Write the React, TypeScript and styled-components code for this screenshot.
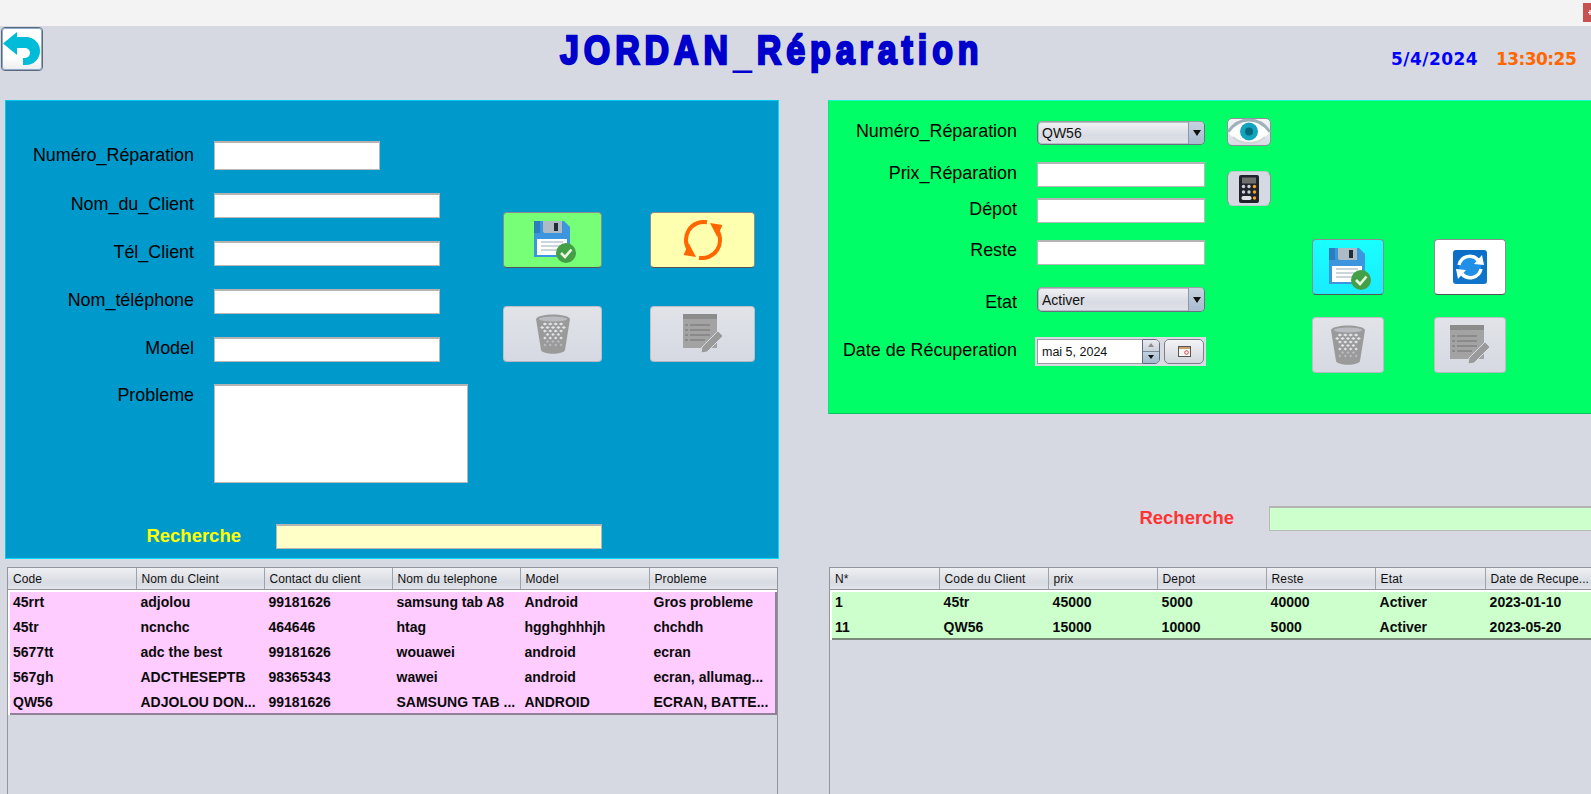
import React from "react";
import styled, { createGlobalStyle } from "styled-components";

const Global = createGlobalStyle`
  html, body { margin: 0; padding: 0; background: #d6d9e2; }
  body { font-family: "Liberation Sans", Arial, sans-serif; overflow: hidden; }
  * { box-sizing: border-box; }
`;

const Page = styled.div`
  width: 1591px; height: 794px; overflow: hidden; background: #d6d9e2; color: #000;
`;
const WindowStrip = styled.div`
  height: 26px; background: #f3f3f3; display: flex; justify-content: flex-end; padding-top: 3px;
`;
const CloseTab = styled.div`
  width: 8px; height: 19px; background: #c75050; display: flex; align-items: center; justify-content: flex-end;
  svg { display: block; }
`;
const Header = styled.header`
  height: 74px; display: flex; align-items: flex-start;
`;
const BackButton = styled.button`
  width: 42px; height: 44px; margin: 1px 0 0 1px; padding: 0; display: block; flex: none;
  border: 1px solid #5e6a7c; outline: 1px solid #8aa9cc; outline-offset: -2px; border-radius: 4px;
  background: linear-gradient(#ffffff 70%, #ececec);
  svg { display: block; }
`;
const Title = styled.h1`
  margin: 0 0 0 517px; font-family: "Liberation Sans", sans-serif;
  font-weight: 700; font-size: 41px; line-height: 48px; letter-spacing: 6px; color: #0000cc; white-space: nowrap;
  -webkit-text-stroke: 2.4px #0000cc; transform: scaleX(0.827); transform-origin: left center;
`;
const TitleUnderscore = styled.span`
  -webkit-text-stroke: 0; font-weight: 400; position: relative; top: 1px;
`;
const Clock = styled.div`
  position: absolute; left: 1391px; top: 47px; display: flex; gap: 18px;
  font-family: "DejaVu Sans", sans-serif; font-weight: 700; font-size: 17px; line-height: 24px; white-space: nowrap;
`;
const ClockPart = styled.span<{ $color: string; $spacing: number }>`
  color: ${(p) => p.$color}; letter-spacing: ${(p) => p.$spacing}px;
`;
const Main = styled.main`
  display: flex; align-items: flex-start;
`;
const LeftColumn = styled.section`
  width: 774px; margin-left: 5px; flex: none;
`;
const RightColumn = styled.section`
  margin-left: 49px; width: 763px; flex: none;
`;
const BluePanel = styled.div`
  height: 459px; background: #0099cc; border: 1px solid #00c8f0; border-right-color: #00ddff; border-bottom-color: #00ddff;
  display: grid; grid-template-columns: 497px auto; align-content: start; padding-top: 40px;
`;
const GreenPanel = styled.div`
  height: 314px; background: #00ff66; border-top: 1px solid #19f5d0; border-bottom: 1px solid #10c060; border-left: 1px solid #10e080;
  display: flex; align-items: flex-start; padding-top: 20px;
`;
const FormColumn = styled.div``;
const FormRow = styled.div<{ $top?: number; $labelWidth: number; $start?: boolean }>`
  display: grid; grid-template-columns: ${(p) => p.$labelWidth}px auto; column-gap: 20px;
  align-items: ${(p) => (p.$start ? "start" : "center")}; margin-top: ${(p) => p.$top ?? 0}px;
`;
const Label = styled.label<{ $shift?: number }>`
  font-size: 17.9px; line-height: 20px; text-align: right; white-space: nowrap; color: #000; display: block;
  margin-top: ${(p) => p.$shift ?? -4}px;
`;
const Field = styled.div<{ $w: number; $h: number; $bg?: string }>`
  width: ${(p) => p.$w}px; height: ${(p) => p.$h}px; background: ${(p) => p.$bg ?? "#fff"};
  border: 1px solid #b9b9b9; border-top: 2px solid #b4b4b4; border-bottom-width: 1px;
`;
const ButtonGrid = styled.div<{ $cols: string; $gap: number; $rowGap: number; $top: number; $left: number }>`
  display: grid; grid-template-columns: ${(p) => p.$cols}; column-gap: ${(p) => p.$gap}px; row-gap: ${(p) => p.$rowGap}px;
  grid-auto-rows: 56px; margin-top: ${(p) => p.$top}px; margin-left: ${(p) => p.$left}px; align-self: start;
`;
const ActionButton = styled.button<{ $bg?: string; $off?: boolean }>`
  padding: 0; display: flex; align-items: center; justify-content: center; border-radius: 4px;
  background: ${(p) => p.$bg ?? "linear-gradient(#e1e3e8, #d6d9e2)"};
  border: 1px solid ${(p) => (p.$off ? "#bcbfc8" : "#8b8b90")};
  border-bottom-color: ${(p) => (p.$off ? "#b5b8c2" : "#555")};
`;
const SearchRow = styled.div<{ $labelWidth: number; $top: number }>`
  display: grid; grid-template-columns: ${(p) => p.$labelWidth}px auto; column-gap: 35px; align-items: center;
  margin-top: ${(p) => p.$top}px;
`;
const SearchLabel = styled.label<{ $color: string }>`
  text-align: right; font-weight: 700; font-size: 18.5px; line-height: 20px; color: ${(p) => p.$color}; margin-top: -2px;
`;
const SideIcons = styled.div`
  margin-left: 21px; display: flex; flex-direction: column; align-items: flex-start;
`;
const EyeButton = styled.button`
  width: 44px; height: 28px; margin-top: -3px; padding: 0; position: relative; border-radius: 5px; border: 1px solid #8e8f99;
  background: linear-gradient(#f4f5f7, #d8dbe3); overflow: visible;
  svg { position: absolute; left: -1px; top: -2px; }
`;
const CalcButton = styled.button`
  width: 44px; height: 35px; margin-top: 25px; padding: 0; display: flex; align-items: center; justify-content: center;
  border-radius: 6px; border: 1px solid #c4c7d0; border-left-color: #8e8f99; border-right-color: #8e8f99; background: #d5d9e2;
`;
const Combo = styled.div<{ $h: number }>`
  width: 168px; height: ${(p) => p.$h}px; border: 1px solid #6b7080; border-top-color: #9a9ca6; border-radius: 5px; margin-left: 0;
  display: flex; overflow: hidden; background: linear-gradient(#f1f2f5, #d8dbe3 60%, #dfe2e8);
  box-shadow: 0 0 0 1px #b9bcc6 inset;
`;
const ComboText = styled.span`
  flex: 1; font-size: 14px; line-height: 1; align-self: center; padding-left: 4px; color: #111;
`;
const ComboArrow = styled.span`
  width: 16px; background: linear-gradient(#c6d2e0, #a9bbd0); border-left: 1px solid #8e97a8;
  display: flex; align-items: center; justify-content: center;
  &::after { content: ""; border: 4.5px solid transparent; border-top: 6px solid #111; border-bottom: 0; }
`;
const DateBox = styled.div`
  width: 171px; height: 29px; margin-left: -2px; background: #d8dbe2; padding: 2px; display: flex; align-items: stretch;
`;
const DateField = styled.div`
  width: 106px; height: 25px; background: #fff; border: 1px solid #9b9da6; border-right: 0; font-size: 12.5px; line-height: 24px; padding-left: 4px; color: #111;
`;
const Spinner = styled.div`
  width: 18px; height: 25px; border: 1px solid #5f6b80; border-radius: 0 5px 5px 0; display: grid; grid-template-rows: 1fr 1fr; overflow: hidden;
`;
const SpinPart = styled.span<{ $up?: boolean }>`
  display: flex; align-items: center; justify-content: center;
  background: ${(p) => (p.$up ? "linear-gradient(#e9ebef,#ccd0d9)" : "linear-gradient(#c3d0df,#a5b8cd)")};
  border-bottom: ${(p) => (p.$up ? "1px solid #7d8898" : "0")};
  &::after { content: ""; border: 3.5px solid transparent;
    ${(p) => (p.$up ? "border-bottom: 4px solid #8a8d96; border-top: 0;" : "border-top: 4px solid #111; border-bottom: 0;")} }
`;
const CalendarButton = styled.button`
  width: 40px; height: 25px; margin-left: 4px; padding: 0; border: 1px solid #7d808c; border-radius: 5px;
  background: linear-gradient(#f3f4f6, #d2d5dd); display: flex; align-items: center; justify-content: center;
`;
const TableFrame = styled.div<{ $w: number; $ml: number; $top: number; $h: number }>`
  width: ${(p) => p.$w}px; height: ${(p) => p.$h}px; margin-left: ${(p) => p.$ml}px; margin-top: ${(p) => p.$top}px;
  border-left: 1px solid #93949e; border-right: 1px solid #93949e; 
`;
const Row = styled.div<{ $cols: string }>`
  display: grid; grid-template-columns: ${(p) => p.$cols}; height: 25px;
`;
const HeadRow = styled(Row)`
  height: 23px; border-top: 1px solid #93949e; border-bottom: 1px solid #93949e;
  background: linear-gradient(#eef0f3, #d8dbe2 70%, #e2e4ea);
`;
const HeadCell = styled.div`
  font-size: 12px; line-height: 22px; padding-left: 5px; border-left: 1px solid #9fa1ab; white-space: nowrap; overflow: hidden; color: #111;
  letter-spacing: 0.1px;
  &:first-child { border-left: 0; }
`;
const Body = styled.div<{ $bg: string; $edge: string }>`
  background: ${(p) => p.$bg};
  box-shadow: inset 2px 2px 0 #fff, inset -2px -2px 0 ${(p) => p.$edge};
`;
const Cell = styled.div`
  font-size: 14px; font-weight: 700; line-height: 25px; padding-left: 5px; white-space: nowrap; overflow: hidden; color: #0a0a0a;
`;

const Floppy = () => (
  <svg width="44" height="44" viewBox="0 0 44 44" style={{ marginLeft: 6, marginTop: 6 }}>
    <path d="M0 0H30L36 6V36H0Z" fill="#3d96dd" />
    <path d="M0 0H6V12H0Z" fill="#2b7dbd" />
    <path d="M9 0H28V12H11A2 2 0 0 1 9 10Z" fill="#aebbc4" />
    <rect x="20" y="2" width="4" height="8" fill="#1f2d3a" />
    <rect x="3" y="18" width="30" height="16" fill="#fff" />
    <path d="M7 21H29M7 25H29M7 29H25" stroke="#ccd5da" strokeWidth="2" />
    <circle cx="32" cy="32" r="10" fill="#43a047" />
    <path d="M27 32L31 36L37.5 28.5" fill="none" stroke="#e8f5e0" strokeWidth="2.6" />
  </svg>
);
const OrangeSync = () => (
  <svg width="40" height="40" viewBox="0 0 40 40">
    <path d="M24 2.2A18 18 0 0 0 6 30" fill="none" stroke="#ff6600" strokeWidth="4" />
    <path d="M5.7 23L13 37L.6 35Z" fill="#ff6600" />
    <path d="M16 37.8A18 18 0 0 0 34 10" fill="none" stroke="#ff6600" strokeWidth="4" />
    <path d="M34.3 17L27 3L39.4 5Z" fill="#ff6600" />
  </svg>
);
const Trash = () => (
  <svg width="34" height="40" viewBox="0 0 34 40">
    <path d="M0 5C2 -1 32 -1 34 5L29 36C27 41 7 41 5 36Z" fill="#9a9a9a" />
    <ellipse cx="17" cy="5" rx="14" ry="2.6" fill="#b9bbc0" />
    {[10, 13.5, 17, 20.5, 24, 27.5, 31].map((y, r) =>
      [0, 1, 2, 3, 4, 5].map((i) => {
        const x = 3.5 + i * 5.4 + (r % 2 ? 2.7 : 0);
        const inset = 2.5 + (y - 6) * 0.16;
        const hw = 2.3 - r * 0.14;
        return x - hw > inset && x + hw < 34 - inset ? (
          <path key={`${r}-${i}`} d={`M${x - hw} ${y}L${x} ${y - 1.4}L${x + hw} ${y}L${x} ${y + 1.4}Z`} fill={r > 4 ? "#b9bbc0" : "#e2e4e9"} />
        ) : null;
      })
    )}
  </svg>
);
const NotePen = () => (
  <svg width="42" height="40" viewBox="0 0 42 40" style={{ marginLeft: 2 }}>
    <rect x="0" y="0" width="34" height="34" fill="#a3a3a3" />
    <rect x="0" y="0" width="34" height="5" fill="#8c8c8c" />
    <path d="M7 11H27M7 16H27M7 21H27M7 26H22" stroke="#8a8a8a" strokeWidth="2" />
    <path d="M2 11H5M2 16H5M2 21H5M2 26H5" stroke="#8a8a8a" strokeWidth="2" />
    <path d="M35 17L40 22L24 38L18 39L19 33Z" fill="#9a9a9a" stroke="#d8dbe2" strokeWidth="1" />
  </svg>
);
const BlueSync = () => (
  <svg width="34" height="34" viewBox="0 0 34 34">
    <defs>
      <linearGradient id="bs" x1="0" y1="0" x2="0" y2="1">
        <stop offset="0" stopColor="#0b6ec6" />
        <stop offset="1" stopColor="#0f74cc" />
      </linearGradient>
    </defs>
    <rect width="34" height="34" rx="3" fill="url(#bs)" />
    <circle cx="17" cy="17" r="11" fill="#1f8fe8" />
    <path d="M6 15A11 11 0 0 1 25 10" fill="none" stroke="#fff" strokeWidth="3.4" />
    <path d="M21 14L31 15L29 5Z" fill="#fff" />
    <path d="M28 19A11 11 0 0 1 9 24" fill="none" stroke="#fff" strokeWidth="3.4" />
    <path d="M13 20L3 19L5 29Z" fill="#fff" />
  </svg>
);
const Eye = () => (
  <svg width="44" height="30" viewBox="0 0 44 30">
    <path d="M1 15C12 -1 32 -1 43 15C32 29 12 29 1 15Z" fill="#fff" />
    <path d="M1 15C12 -1 32 -1 43 15" fill="none" stroke="#a0b0b8" strokeWidth="3" />
    <path d="M6 20C14 28 30 28 38 20" fill="none" stroke="#d0d6da" strokeWidth="2" />
    <circle cx="22" cy="14.5" r="9" fill="#12a3bf" />
    <circle cx="22" cy="14.5" r="4" fill="#04687c" />
  </svg>
);
const Calc = () => (
  <svg width="20" height="28" viewBox="0 0 20 28">
    <rect width="20" height="28" rx="2" fill="#20232b" />
    <rect x="3" y="2.5" width="14" height="6" fill="#6e6e6e" />
    {[11.5, 17].map((y) => [4.5, 10, 15.5].map((x, i) => (
      <circle key={`${x}-${y}`} cx={x} cy={y} r="1.7" fill={i === 2 ? "#f5a623" : "#cfd2d6"} />
    )))}
    <rect x="2.5" y="21" width="10" height="4" rx="1.8" fill="#dfe1e4" />
    <circle cx="15.5" cy="23" r="1.7" fill="#f5a623" />
  </svg>
);
const BackArrow = () => (
  <svg width="40" height="42" viewBox="0 0 40 42">
    <path d="M15 4L1 15.5L15 27V20H23A5 5 0 0 1 23 30H21V37H24A14 14 0 0 0 24 9H15Z" fill="#00bcd9" />
  </svg>
);
const CalendarIcon = () => (
  <svg width="13" height="11" viewBox="0 0 13 11">
    <rect x=".5" y=".5" width="12" height="10" fill="#f6f6f6" stroke="#555" />
    <rect x="1" y="1" width="11" height="2" fill="#c9a06a" />
    <circle cx="8.5" cy="6.5" r="1.8" fill="none" stroke="#e04040" />
  </svg>
);
const CloseMark = () => (
  <svg width="3" height="7" viewBox="0 0 3 7">
    <path d="M0 3.5H3M2 1V6" stroke="#fff" strokeWidth="1.2" />
  </svg>
);

const leftCols = "127.5px 128px 128px 128px 129px 129.5px";
const rightCols = "108.6px 109px 109px 109px 109px 110px 110px";
const leftHead = ["Code", "Nom du Cleint", "Contact du client", "Nom du telephone", "Model", "Probleme"];
const leftRows = [
  ["45rrt", "adjolou", "99181626", "samsung tab A8", "Android", "Gros probleme"],
  ["45tr", "ncnchc", "464646", "htag", "hgghghhhjh", "chchdh"],
  ["5677tt", "adc the best", "99181626", "wouawei", "android", "ecran"],
  ["567gh", "ADCTHESEPTB", "98365343", "wawei", "android", "ecran, allumag..."],
  ["QW56", "ADJOLOU DON...", "99181626", "SAMSUNG TAB ...", "ANDROID", "ECRAN, BATTE..."],
];
const rightHead = ["N*", "Code du Client", "prix", "Depot", "Reste", "Etat", "Date de Recupe..."];
const rightRows = [
  ["1", "45tr", "45000", "5000", "40000", "Activer", "2023-01-10"],
  ["11", "QW56", "15000", "10000", "5000", "Activer", "2023-05-20"],
];
const clientRows: [string, number, number, number][] = [
  ["Nom_du_Client", 23, 226, 25],
  ["Tél_Client", 23, 226, 25],
  ["Nom_téléphone", 23, 226, 25],
  ["Model", 23, 226, 25],
];

function DataTable(props: { cols: string; head: string[]; rows: string[][]; bg: string; edge: string; w: number; ml: number; top: number; h: number }) {
  return (
    <TableFrame $w={props.w} $ml={props.ml} $top={props.top} $h={props.h}>
      <HeadRow $cols={props.cols}>
        {props.head.map((h) => (
          <HeadCell key={h}>{h}</HeadCell>
        ))}
      </HeadRow>
      <Body $bg={props.bg} $edge={props.edge}>
        {props.rows.map((r) => (
          <Row key={r[0]} $cols={props.cols}>
            {r.map((c, i) => (
              <Cell key={i}>{c}</Cell>
            ))}
          </Row>
        ))}
      </Body>
    </TableFrame>
  );
}

export default function App() {
  return (
    <Page>
      <Global />
      <WindowStrip>
        <CloseTab><CloseMark /></CloseTab>
      </WindowStrip>
      <Header>
        <BackButton aria-label="Retour">
          <BackArrow />
        </BackButton>
        <Title>JORDAN<TitleUnderscore>_</TitleUnderscore>Réparation</Title>
        <Clock>
          <ClockPart $color="#0000ff" $spacing={0.45}>5/4/2024</ClockPart>
          <ClockPart $color="#ff6600" $spacing={-0.55}>13:30:25</ClockPart>
        </Clock>
      </Header>
      <Main>
        <LeftColumn>
          <BluePanel>
            <FormColumn>
              <FormRow $labelWidth={188}>
                <Label $shift={-2}>Numéro_Réparation</Label>
                <Field $w={166} $h={29} />
              </FormRow>
              {clientRows.map(([label, top, w, h]) => (
                <FormRow key={label} $labelWidth={188} $top={top}>
                  <Label>{label}</Label>
                  <Field $w={w} $h={h} />
                </FormRow>
              ))}
              <FormRow $labelWidth={188} $top={22} $start>
                <Label $shift={1}>Probleme</Label>
                <Field $w={254} $h={99} />
              </FormRow>
              <SearchRow $labelWidth={235} $top={41}>
                <SearchLabel $color="#ffff00">Recherche</SearchLabel>
                <Field $w={326} $h={25} $bg="#ffffc8" />
              </SearchRow>
            </FormColumn>
            <ButtonGrid $cols="99px 105px" $gap={48} $rowGap={38} $top={71} $left={0}>
              <ActionButton $bg="#77ff77"><Floppy /></ActionButton>
              <ActionButton $bg="#ffffb0"><OrangeSync /></ActionButton>
              <ActionButton $off><Trash /></ActionButton>
              <ActionButton $off><NotePen /></ActionButton>
            </ButtonGrid>
          </BluePanel>
          <DataTable cols={leftCols} head={leftHead} rows={leftRows} bg="#ffccff" edge="#8f8298" w={771} ml={2} top={8} h={227} />
        </LeftColumn>
        <RightColumn>
          <GreenPanel>
            <FormColumn>
              <FormRow $labelWidth={188} $top={0}>
                <Label>Numéro_Réparation</Label>
                <Combo $h={24}>
                  <ComboText>QW56</ComboText>
                  <ComboArrow />
                </Combo>
              </FormRow>
              <FormRow $labelWidth={188} $top={17}>
                <Label>Prix_Réparation</Label>
                <Field $w={168} $h={25} />
              </FormRow>
              <FormRow $labelWidth={188} $top={11}>
                <Label $shift={-4}>Dépot</Label>
                <Field $w={168} $h={25} />
              </FormRow>
              <FormRow $labelWidth={188} $top={17}>
                <Label $shift={-5}>Reste</Label>
                <Field $w={168} $h={25} />
              </FormRow>
              <FormRow $labelWidth={188} $top={22}>
                <Label $shift={4}>Etat</Label>
                <Combo $h={25}>
                  <ComboText>Activer</ComboText>
                  <ComboArrow />
                </Combo>
              </FormRow>
              <FormRow $labelWidth={188} $top={25}>
                <Label>Date de Récuperation</Label>
                <DateBox>
                  <DateField>mai 5, 2024</DateField>
                  <Spinner>
                    <SpinPart $up />
                    <SpinPart />
                  </Spinner>
                  <CalendarButton aria-label="Calendrier">
                    <CalendarIcon />
                  </CalendarButton>
                </DateBox>
              </FormRow>
            </FormColumn>
            <SideIcons>
              <EyeButton aria-label="Voir"><Eye /></EyeButton>
              <CalcButton aria-label="Calculer"><Calc /></CalcButton>
            </SideIcons>
            <ButtonGrid $cols="72px 72px" $gap={50} $rowGap={22} $top={118} $left={41}>
              <ActionButton $bg="linear-gradient(#19ffff, #19ecff)"><Floppy /></ActionButton>
              <ActionButton $bg="#ffffff"><BlueSync /></ActionButton>
              <ActionButton $off><Trash /></ActionButton>
              <ActionButton $off><NotePen /></ActionButton>
            </ButtonGrid>
          </GreenPanel>
          <SearchRow $labelWidth={406} $top={92}>
            <SearchLabel $color="#ff3333">Recherche</SearchLabel>
            <Field $w={330} $h={25} $bg="#ccffcc" />
          </SearchRow>
          <DataTable cols={rightCols} head={rightHead} rows={rightRows} bg="#ccffcc" edge="#7c8a7c" w={770} ml={1} top={36} h={227} />
        </RightColumn>
      </Main>
    </Page>
  );
}
